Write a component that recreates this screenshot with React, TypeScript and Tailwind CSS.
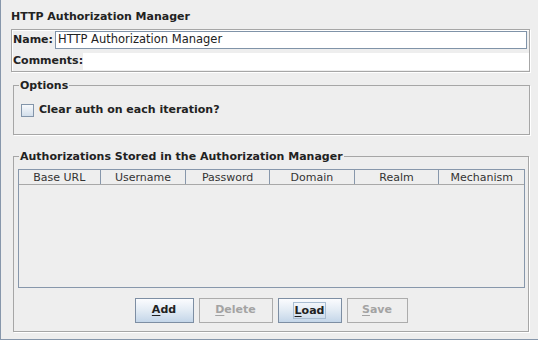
import React from 'react'

const font = { fontFamily: '"DejaVu Sans", Verdana, sans-serif' }

const columns = [
  { label: 'Base URL', w: 'w-[82px]' },
  { label: 'Username', w: 'w-[86px]' },
  { label: 'Password', w: 'w-[84px]' },
  { label: 'Domain', w: 'w-[85px]' },
  { label: 'Realm', w: 'w-[85px]' },
  { label: 'Mechanism', w: 'w-[85px]' },
]

function Mnemonic({ text }: { text: string }) {
  return (
    <>
      <span className="underline underline-offset-[2px]">{text[0]}</span>
      {text.slice(1)}
    </>
  )
}

function Button({ text, w, enabled, focused }: { text: string; w: string; enabled: boolean; focused?: boolean }) {
  if (!enabled) {
    return (
      <div className={`${w} flex h-[25px] items-center justify-center border border-[#acacac] bg-[#eeeeee] text-[11px] font-bold text-[#a3a3a3]`}>
        <Mnemonic text={text} />
      </div>
    )
  }
  return (
    <div className={`${w} flex h-[25px] items-center justify-center border border-[#7d8ea3] bg-gradient-to-b from-[#fbfcfe] via-[#e2ebf4] to-[#c4d6e9] text-[11px] font-bold text-[#222]`}>
      {focused ? (
        <span className="border border-[#a9bdd2] px-[1px] leading-[15px]">
          <Mnemonic text={text} />
        </span>
      ) : (
        <Mnemonic text={text} />
      )}
    </div>
  )
}

export default function App() {
  return (
    <div
      className="flex h-[340px] w-[538px] flex-col border-b border-l border-[#8797ab] bg-[#eeeeee] text-[#222]"
      style={font}
    >
      {/* 제목 */}
      <div className="ml-[10px] mt-[10px] h-[13px] text-[11px] font-bold leading-[13px]">HTTP Authorization Manager</div>

      {/* 이름 / 설명 */}
      <div className="ml-[10px] mt-[6px] flex h-[43px] w-[519px] flex-col border border-[#a6a6a6] shadow-[1px_1px_0_#fff,inset_1px_1px_0_#fff]">
        <div className="mt-[1px] flex h-[18px] items-center">
          <span className="w-[43px] pl-[1px] text-[11px] font-bold">Name:</span>
          <div className="flex h-[18px] w-[472px] items-center border border-[#8093a8] bg-white pl-[2px] text-[11.5px]">
            HTTP Authorization Manager
          </div>
        </div>
        <div className="mt-[3px] flex h-[18px] items-center">
          <span className="w-[71px] pl-[1px] text-[11px] font-bold">Comments:</span>
          <div className="h-[17px] flex-1 bg-white" />
        </div>
      </div>

      {/* 옵션 */}
      <fieldset className="ml-[12px] mt-[7px] h-[56px] w-[517px] border border-[#a6a6a6] px-0 shadow-[1px_1px_0_#fff]">
        <legend className="ml-[5px] px-[1px] text-[11px] font-bold leading-[13px]">Options</legend>
        <div className="ml-[7px] mt-[10px] flex items-center gap-[5px]">
          <div className="h-[13px] w-[13px] border border-[#8395aa] bg-gradient-to-b from-[#f7f9fc] to-[#d3dfeb]" />
          <span className="text-[11px] font-bold">Clear auth on each iteration?</span>
        </div>
      </fieldset>

      {/* 인증 목록 */}
      <fieldset className="ml-[12px] mt-[15px] h-[182px] w-[516px] border border-[#a6a6a6] px-0 shadow-[1px_1px_0_#fff]">
        <legend className="ml-[5px] px-[1px] text-[11px] font-bold leading-[13px]">
          Authorizations Stored in the Authorization Manager
        </legend>
        <div className="ml-[4px] mt-[6px] flex h-[119px] w-[507px] flex-col border-b border-l border-r border-[#8797ab]">
          <div className="flex h-[16px] border-b border-t border-b-[#a8a8a8] border-t-[#8797ab]">
            {columns.map((c, i) => (
              <div
                key={c.label}
                className={`${c.w} flex items-center justify-center text-[11px] leading-[13px] text-[#333] ${i < columns.length - 1 ? 'border-r border-[#8797ab]' : ''}`}
              >
                {c.label}
              </div>
            ))}
          </div>
          <div className="flex-1" />
        </div>
        <div className="mt-[10px] flex justify-center gap-[5px]">
          <Button text="Add" w="w-[59px]" enabled />
          <Button text="Delete" w="w-[74px]" enabled={false} />
          <Button text="Load" w="w-[64px]" enabled focused />
          <Button text="Save" w="w-[61px]" enabled={false} />
        </div>
      </fieldset>
    </div>
  )
}
